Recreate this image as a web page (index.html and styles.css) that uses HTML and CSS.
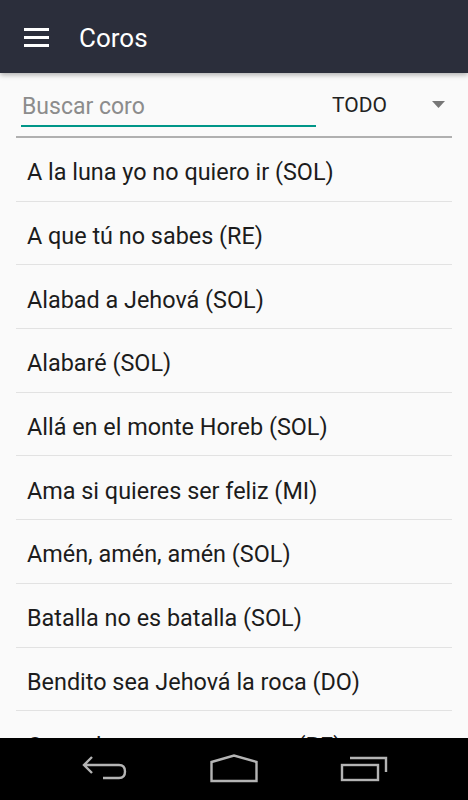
FILE: index.html
```html
<!DOCTYPE html>
<html lang="es">
<head>
    <meta charset="UTF-8">
    <meta name="viewport" content="width=device-width, initial-scale=1.0">
    <title>Coros</title>
    <link rel="stylesheet" href="styles.css">
</head>
<body>
    <div class="screen">
        <div class="toolbar">
            <svg class="menu-icon" viewBox="0 0 26 20" width="26" height="20">
                <rect x="0" y="0" width="25" height="3" fill="#fff" />
                <rect x="0" y="8" width="25" height="3" fill="#fff" />
                <rect x="0" y="16" width="25" height="3" fill="#fff" />
            </svg>
            <div class="title">Coros</div>
        </div>
        <div class="search-row">
            <div class="search-box">Buscar coro</div>
            <div class="spinner">
                <span>TODO</span>
                <svg viewBox="0 0 14 8" width="14" height="8">
                    <polygon points="0,0 13,0 6.5,7" fill="#777" />
                </svg>
            </div>
        </div>
        <div class="list">
            <div class="item">A la luna yo no quiero ir (SOL)</div>
            <div class="item">A que tú no sabes (RE)</div>
            <div class="item">Alabad a Jehová (SOL)</div>
            <div class="item">Alabaré (SOL)</div>
            <div class="item">Allá en el monte Horeb (SOL)</div>
            <div class="item">Ama si quieres ser feliz (MI)</div>
            <div class="item">Amén, amén, amén (SOL)</div>
            <div class="item">Batalla no es batalla (SOL)</div>
            <div class="item">Bendito sea Jehová la roca (DO)</div>
            <div class="item">Cantad con voces suaves (RE)</div>
        </div>
        <div class="navbar">
            <svg viewBox="0 0 48 30" width="48" height="30">
                <path d="M12 3 L4 11 L12 19 M4 11 H39 Q45 11 45 17.5 Q45 24 39 24 H23" fill="none" stroke="#b4b4b4" stroke-width="2.4" />
            </svg>
            <svg viewBox="0 0 48 30" width="48" height="30">
                <path d="M1.5 27 V8 L24 1.5 L46.5 8 V27 Z" fill="none" stroke="#b4b4b4" stroke-width="2.4" />
            </svg>
            <svg viewBox="0 0 48 30" width="48" height="30">
                <path d="M10 4 H46 V18" fill="none" stroke="#b4b4b4" stroke-width="2.4" />
                <rect x="2" y="11" width="36" height="15" fill="none" stroke="#b4b4b4" stroke-width="2.4" />
            </svg>
        </div>
    </div>
</body>
</html>
```

FILE: styles.css
```css
body {
    margin: 0;
    font-family: Roboto, "Noto Sans", sans-serif;
    background: #fafafa;
}
.screen {
    width: 468px;
    height: 800px;
    display: flex;
    flex-direction: column;
    overflow: hidden;
}
.toolbar {
    height: 73px;
    flex-shrink: 0;
    background: #2b2e3b;
    display: flex;
    align-items: center;
    padding-left: 24px;
    box-shadow: 0 2px 5px rgba(0, 0, 0, 0.3);
    position: relative;
    z-index: 1;
}
.menu-icon { margin-top: 2px; }
.title {
    color: #fff;
    font-size: 26px;
    margin-left: 29px;
    margin-top: 3px;
}
.search-row {
    height: 63px;
    flex-shrink: 0;
    margin: 0 16px;
    border-bottom: 2px solid #b0b0b0;
    display: flex;
    align-items: flex-start;
}
.search-box {
    width: 294px;
    margin-left: 5px;
    margin-top: 20px;
    height: 32px;
    border-bottom: 2px solid #009688;
    color: #8c8c8c;
    font-size: 23px;
    line-height: 28px;
    padding-left: 1px;
}
.spinner {
    flex: 1;
    display: flex;
    align-items: center;
    justify-content: space-between;
    padding: 0 6px 0 16px;
    margin-top: 20px;
    font-size: 21px;
    color: #222;
}
.list {
    flex: 1;
    overflow: hidden;
    margin: 0 16px;
}
.item {
    box-sizing: border-box;
    height: 63.7px;
    border-bottom: 1px solid #e2e2e2;
    display: flex;
    align-items: center;
    padding-left: 11px;
    padding-top: 6px;
    font-size: 23.4px;
    color: #1c1c1c;
}
.navbar {
    height: 62px;
    flex-shrink: 0;
    background: #000;
    display: flex;
    justify-content: center;
    align-items: center;
    gap: 82px;
}
```
